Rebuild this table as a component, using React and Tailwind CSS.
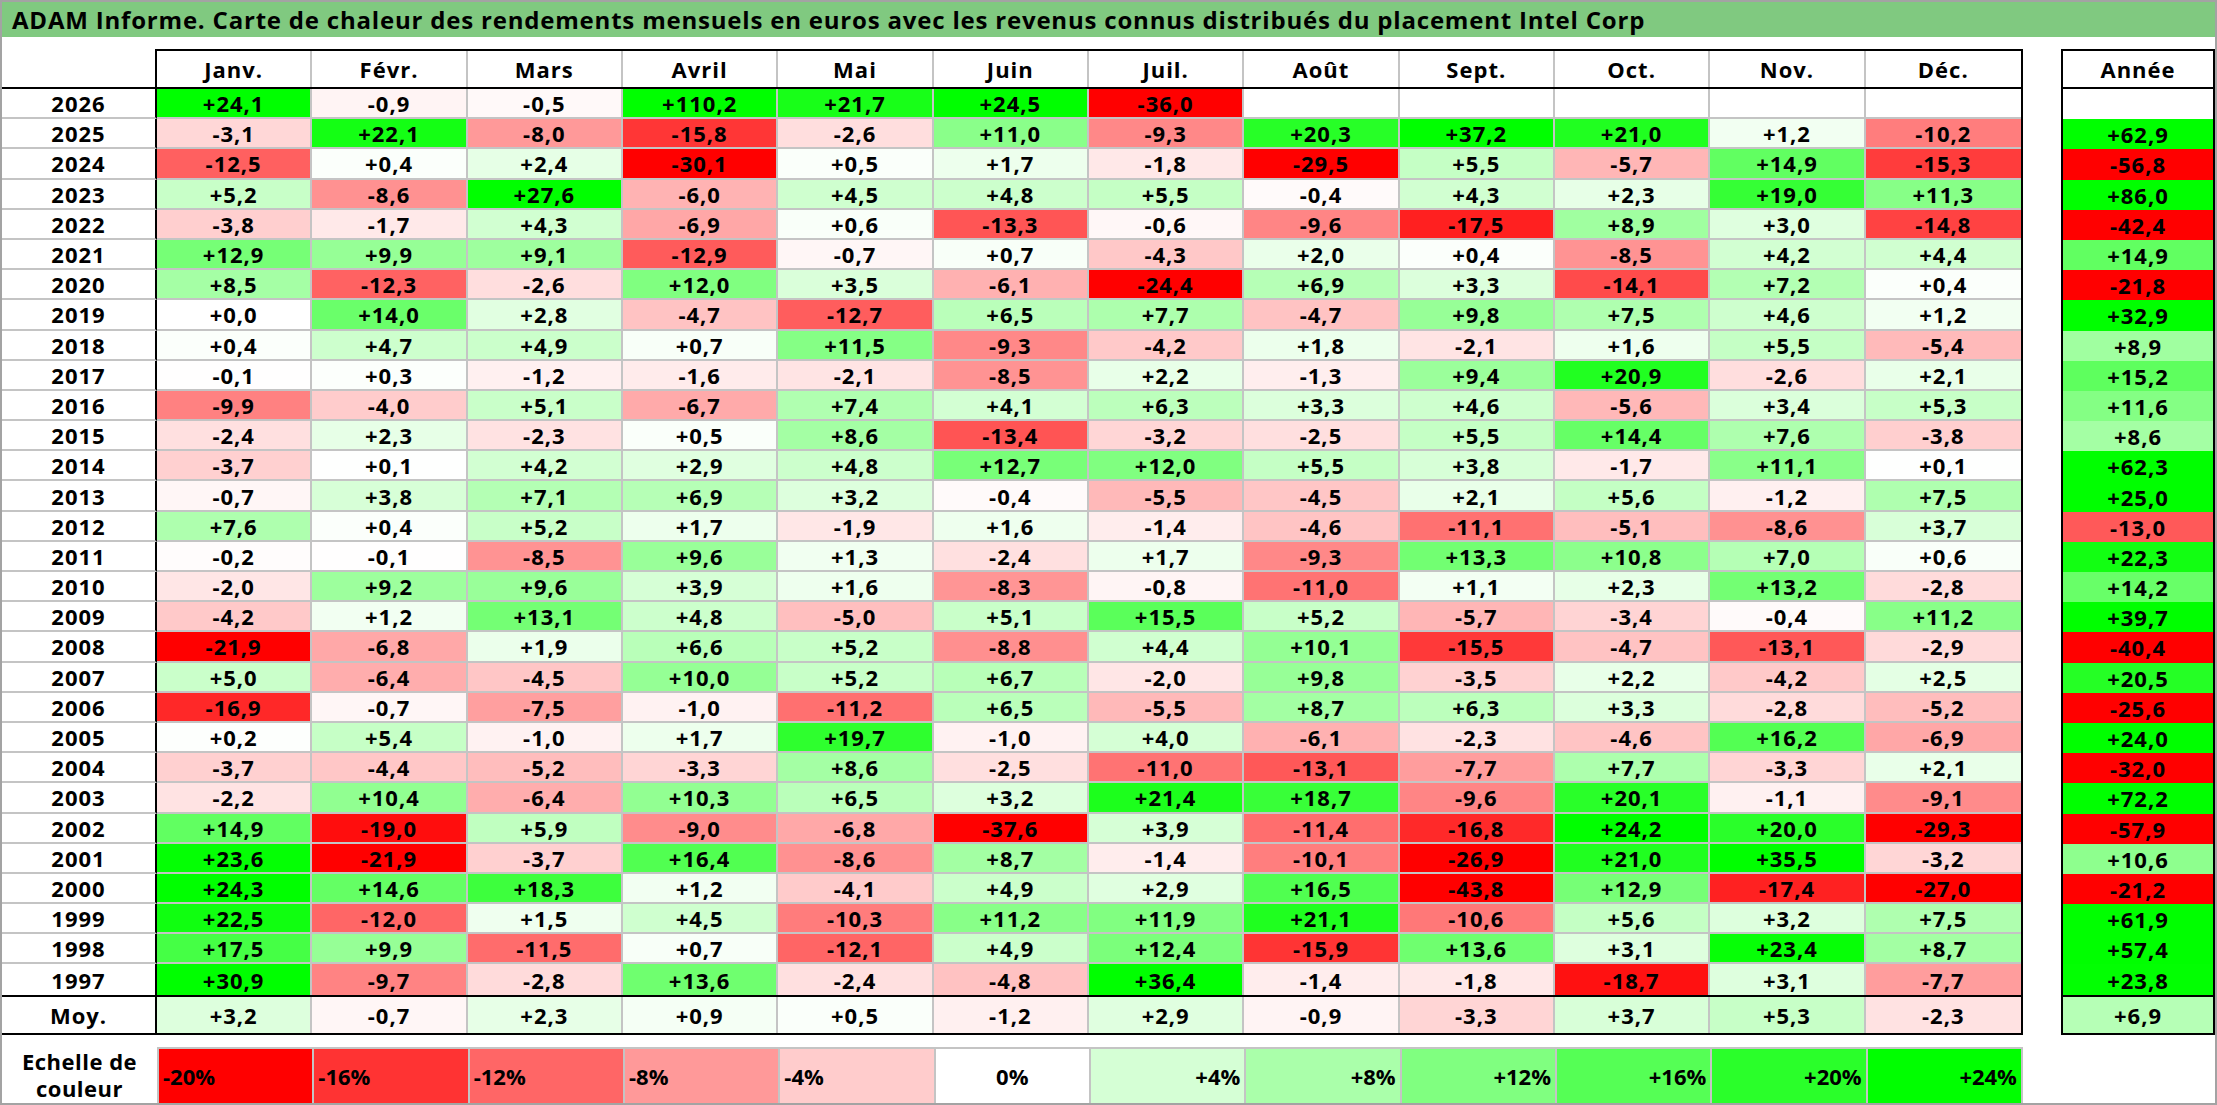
import React from "react";

const MONTHS = ["Janv.", "Févr.", "Mars", "Avril", "Mai", "Juin", "Juil.", "Août", "Sept.", "Oct.", "Nov.", "Déc."];

// year, 12 months, year total
const ROWS = [
  ["2026", "+24,1 -0,9 -0,5 +110,2 +21,7 +24,5 -36,0 . . . . .", "."],
  ["2025", "-3,1 +22,1 -8,0 -15,8 -2,6 +11,0 -9,3 +20,3 +37,2 +21,0 +1,2 -10,2", "+62,9"],
  ["2024", "-12,5 +0,4 +2,4 -30,1 +0,5 +1,7 -1,8 -29,5 +5,5 -5,7 +14,9 -15,3", "-56,8"],
  ["2023", "+5,2 -8,6 +27,6 -6,0 +4,5 +4,8 +5,5 -0,4 +4,3 +2,3 +19,0 +11,3", "+86,0"],
  ["2022", "-3,8 -1,7 +4,3 -6,9 +0,6 -13,3 -0,6 -9,6 -17,5 +8,9 +3,0 -14,8", "-42,4"],
  ["2021", "+12,9 +9,9 +9,1 -12,9 -0,7 +0,7 -4,3 +2,0 +0,4 -8,5 +4,2 +4,4", "+14,9"],
  ["2020", "+8,5 -12,3 -2,6 +12,0 +3,5 -6,1 -24,4 +6,9 +3,3 -14,1 +7,2 +0,4", "-21,8"],
  ["2019", "+0,0 +14,0 +2,8 -4,7 -12,7 +6,5 +7,7 -4,7 +9,8 +7,5 +4,6 +1,2", "+32,9"],
  ["2018", "+0,4 +4,7 +4,9 +0,7 +11,5 -9,3 -4,2 +1,8 -2,1 +1,6 +5,5 -5,4", "+8,9"],
  ["2017", "-0,1 +0,3 -1,2 -1,6 -2,1 -8,5 +2,2 -1,3 +9,4 +20,9 -2,6 +2,1", "+15,2"],
  ["2016", "-9,9 -4,0 +5,1 -6,7 +7,4 +4,1 +6,3 +3,3 +4,6 -5,6 +3,4 +5,3", "+11,6"],
  ["2015", "-2,4 +2,3 -2,3 +0,5 +8,6 -13,4 -3,2 -2,5 +5,5 +14,4 +7,6 -3,8", "+8,6"],
  ["2014", "-3,7 +0,1 +4,2 +2,9 +4,8 +12,7 +12,0 +5,5 +3,8 -1,7 +11,1 +0,1", "+62,3"],
  ["2013", "-0,7 +3,8 +7,1 +6,9 +3,2 -0,4 -5,5 -4,5 +2,1 +5,6 -1,2 +7,5", "+25,0"],
  ["2012", "+7,6 +0,4 +5,2 +1,7 -1,9 +1,6 -1,4 -4,6 -11,1 -5,1 -8,6 +3,7", "-13,0"],
  ["2011", "-0,2 -0,1 -8,5 +9,6 +1,3 -2,4 +1,7 -9,3 +13,3 +10,8 +7,0 +0,6", "+22,3"],
  ["2010", "-2,0 +9,2 +9,6 +3,9 +1,6 -8,3 -0,8 -11,0 +1,1 +2,3 +13,2 -2,8", "+14,2"],
  ["2009", "-4,2 +1,2 +13,1 +4,8 -5,0 +5,1 +15,5 +5,2 -5,7 -3,4 -0,4 +11,2", "+39,7"],
  ["2008", "-21,9 -6,8 +1,9 +6,6 +5,2 -8,8 +4,4 +10,1 -15,5 -4,7 -13,1 -2,9", "-40,4"],
  ["2007", "+5,0 -6,4 -4,5 +10,0 +5,2 +6,7 -2,0 +9,8 -3,5 +2,2 -4,2 +2,5", "+20,5"],
  ["2006", "-16,9 -0,7 -7,5 -1,0 -11,2 +6,5 -5,5 +8,7 +6,3 +3,3 -2,8 -5,2", "-25,6"],
  ["2005", "+0,2 +5,4 -1,0 +1,7 +19,7 -1,0 +4,0 -6,1 -2,3 -4,6 +16,2 -6,9", "+24,0"],
  ["2004", "-3,7 -4,4 -5,2 -3,3 +8,6 -2,5 -11,0 -13,1 -7,7 +7,7 -3,3 +2,1", "-32,0"],
  ["2003", "-2,2 +10,4 -6,4 +10,3 +6,5 +3,2 +21,4 +18,7 -9,6 +20,1 -1,1 -9,1", "+72,2"],
  ["2002", "+14,9 -19,0 +5,9 -9,0 -6,8 -37,6 +3,9 -11,4 -16,8 +24,2 +20,0 -29,3", "-57,9"],
  ["2001", "+23,6 -21,9 -3,7 +16,4 -8,6 +8,7 -1,4 -10,1 -26,9 +21,0 +35,5 -3,2", "+10,6"],
  ["2000", "+24,3 +14,6 +18,3 +1,2 -4,1 +4,9 +2,9 +16,5 -43,8 +12,9 -17,4 -27,0", "-21,2"],
  ["1999", "+22,5 -12,0 +1,5 +4,5 -10,3 +11,2 +11,9 +21,1 -10,6 +5,6 +3,2 +7,5", "+61,9"],
  ["1998", "+17,5 +9,9 -11,5 +0,7 -12,1 +4,9 +12,4 -15,9 +13,6 +3,1 +23,4 +8,7", "+57,4"],
  ["1997", "+30,9 -9,7 -2,8 +13,6 -2,4 -4,8 +36,4 -1,4 -1,8 -18,7 +3,1 -7,7", "+23,8"],
];

const AVG = ["+3,2", "-0,7", "+2,3", "+0,9", "+0,5", "-1,2", "+2,9", "-0,9", "-3,3", "+3,7", "+5,3", "-2,3"];
const AVG_YEAR = "+6,9";

const SCALE = [-20, -16, -12, -8, -4, 0, 4, 8, 12, 16, 20, 24];

// red below zero (full at -20), green above (full at +24)
const heatColor = (v) => {
  if (v === null) return "#ffffff";
  if (v < 0) {
    const c = Math.round(255 * (1 - Math.min(-v / 20, 1)));
    return `rgb(255,${c},${c})`;
  }
  const c = Math.round(255 * (1 - Math.min(v / 24, 1)));
  return `rgb(${c},255,${c})`;
};

const parse = (s) => (s === "." ? null : parseFloat(s.replace(",", ".")));

const TXT = "text-[22px] font-bold tracking-[1px] leading-none text-black";

const MonthCell = ({ value, last, lastRow, h }) => {
  const v = parse(value);
  return (
    <div
      className={`w-[155.33px] ${h} flex items-center justify-center ${TXT} border-[#c4c4c4] ${
        last ? "" : "border-r-2"
      } ${lastRow ? "" : "border-b-2"}`}
      style={{ backgroundColor: heatColor(v) }}
    >
      {v === null ? "" : value}
    </div>
  );
};

const YearCell = ({ label, lastRow, h }) => (
  <div
    className={`w-[155px] ${h} flex items-center justify-center ${TXT} border-r-2 border-black ${
      lastRow ? "" : "border-b-2 border-b-[#c4c4c4]"
    }`}
  >
    {label}
  </div>
);

export default function App() {
  return (
    <div className="w-[2217px] h-[1105px] border-2 border-[#a3a3a3] bg-white font-['Open_Sans',sans-serif] overflow-hidden">
      {/* title */}
      <div className="h-[35px] bg-[#80c980] flex items-center pl-[10px] text-[24px] font-bold tracking-[0.8px] text-black whitespace-nowrap">
        ADAM Informe. Carte de chaleur des rendements mensuels en euros avec les revenus connus distribués du placement Intel Corp
      </div>

      <div className="mt-[12px] flex items-start">
        {/* main table */}
        <div className="w-[2021px]">
          <div className="flex h-[38px]">
            <div className="w-[155px] border-r-2 border-black" />
            <div className="flex border-t-2 border-r-2 border-black">
              {MONTHS.map((m, i) => (
                <div
                  key={m}
                  className={`w-[155.33px] h-[36px] flex items-center justify-center ${TXT} ${
                    i < 11 ? "border-r-2 border-[#c4c4c4]" : ""
                  }`}
                >
                  {m}
                </div>
              ))}
            </div>
          </div>

          <div className="border-t-2 border-b-2 border-black">
            {ROWS.map(([year, months], r) => {
              const lastRow = r === ROWS.length - 1;
              return (
                <div key={year} className="flex">
                  <YearCell label={year} lastRow={lastRow} h="h-[30.2px]" />
                  <div className="flex border-r-2 border-black">
                    {months.split(" ").map((val, i) => (
                      <MonthCell key={i} value={val} last={i === 11} lastRow={lastRow} h="h-[30.2px]" />
                    ))}
                  </div>
                </div>
              );
            })}
          </div>

          <div className="flex border-b-2 border-black">
            <YearCell label="Moy." lastRow h="h-[36px]" />
            <div className="flex border-r-2 border-black">
              {AVG.map((val, i) => (
                <MonthCell key={i} value={val} last={i === 11} lastRow h="h-[36px]" />
              ))}
            </div>
          </div>

          {/* colour scale */}
          <div className="mt-[12px] flex h-[56px]">
            <div className="w-[155px] flex flex-col items-center justify-center text-[22px] font-bold leading-[27px] tracking-[0.5px] text-black">
              <span>Echelle de</span>
              <span>couleur</span>
            </div>
            <div className="flex border-t-2 border-l-2 border-[#c4c4c4]">
              {SCALE.map((s, i) => (
                <div
                  key={s}
                  className={`w-[155.33px] h-[54px] flex items-center text-[22px] font-bold leading-none text-black border-r-2 border-[#c4c4c4] ${
                    s < 0 ? "justify-start pl-[4px]" : s === 0 ? "justify-center" : "justify-end pr-[4px]"
                  } ${i === 11 ? "border-r-0" : ""}`}
                  style={{ backgroundColor: heatColor(s) }}
                >
                  {s > 0 ? `+${s}%` : `${s}%`}
                </div>
              ))}
            </div>
          </div>
        </div>

        {/* year totals */}
        <div className="ml-[38px] w-[154px] border-2 border-black">
          <div className={`h-[36px] flex items-center justify-center ${TXT}`}>Année</div>
          <div className="border-t-2 border-b-2 border-black">
            {ROWS.map(([year, , total]) => {
              const v = parse(total);
              return (
                <div
                  key={year}
                  className={`h-[30.2px] flex items-center justify-center ${TXT}`}
                  style={{ backgroundColor: heatColor(v) }}
                >
                  {v === null ? "" : total}
                </div>
              );
            })}
          </div>
          <div
            className={`h-[36px] flex items-center justify-center ${TXT}`}
            style={{ backgroundColor: heatColor(parse(AVG_YEAR)) }}
          >
            {AVG_YEAR}
          </div>
        </div>
      </div>
    </div>
  );
}
